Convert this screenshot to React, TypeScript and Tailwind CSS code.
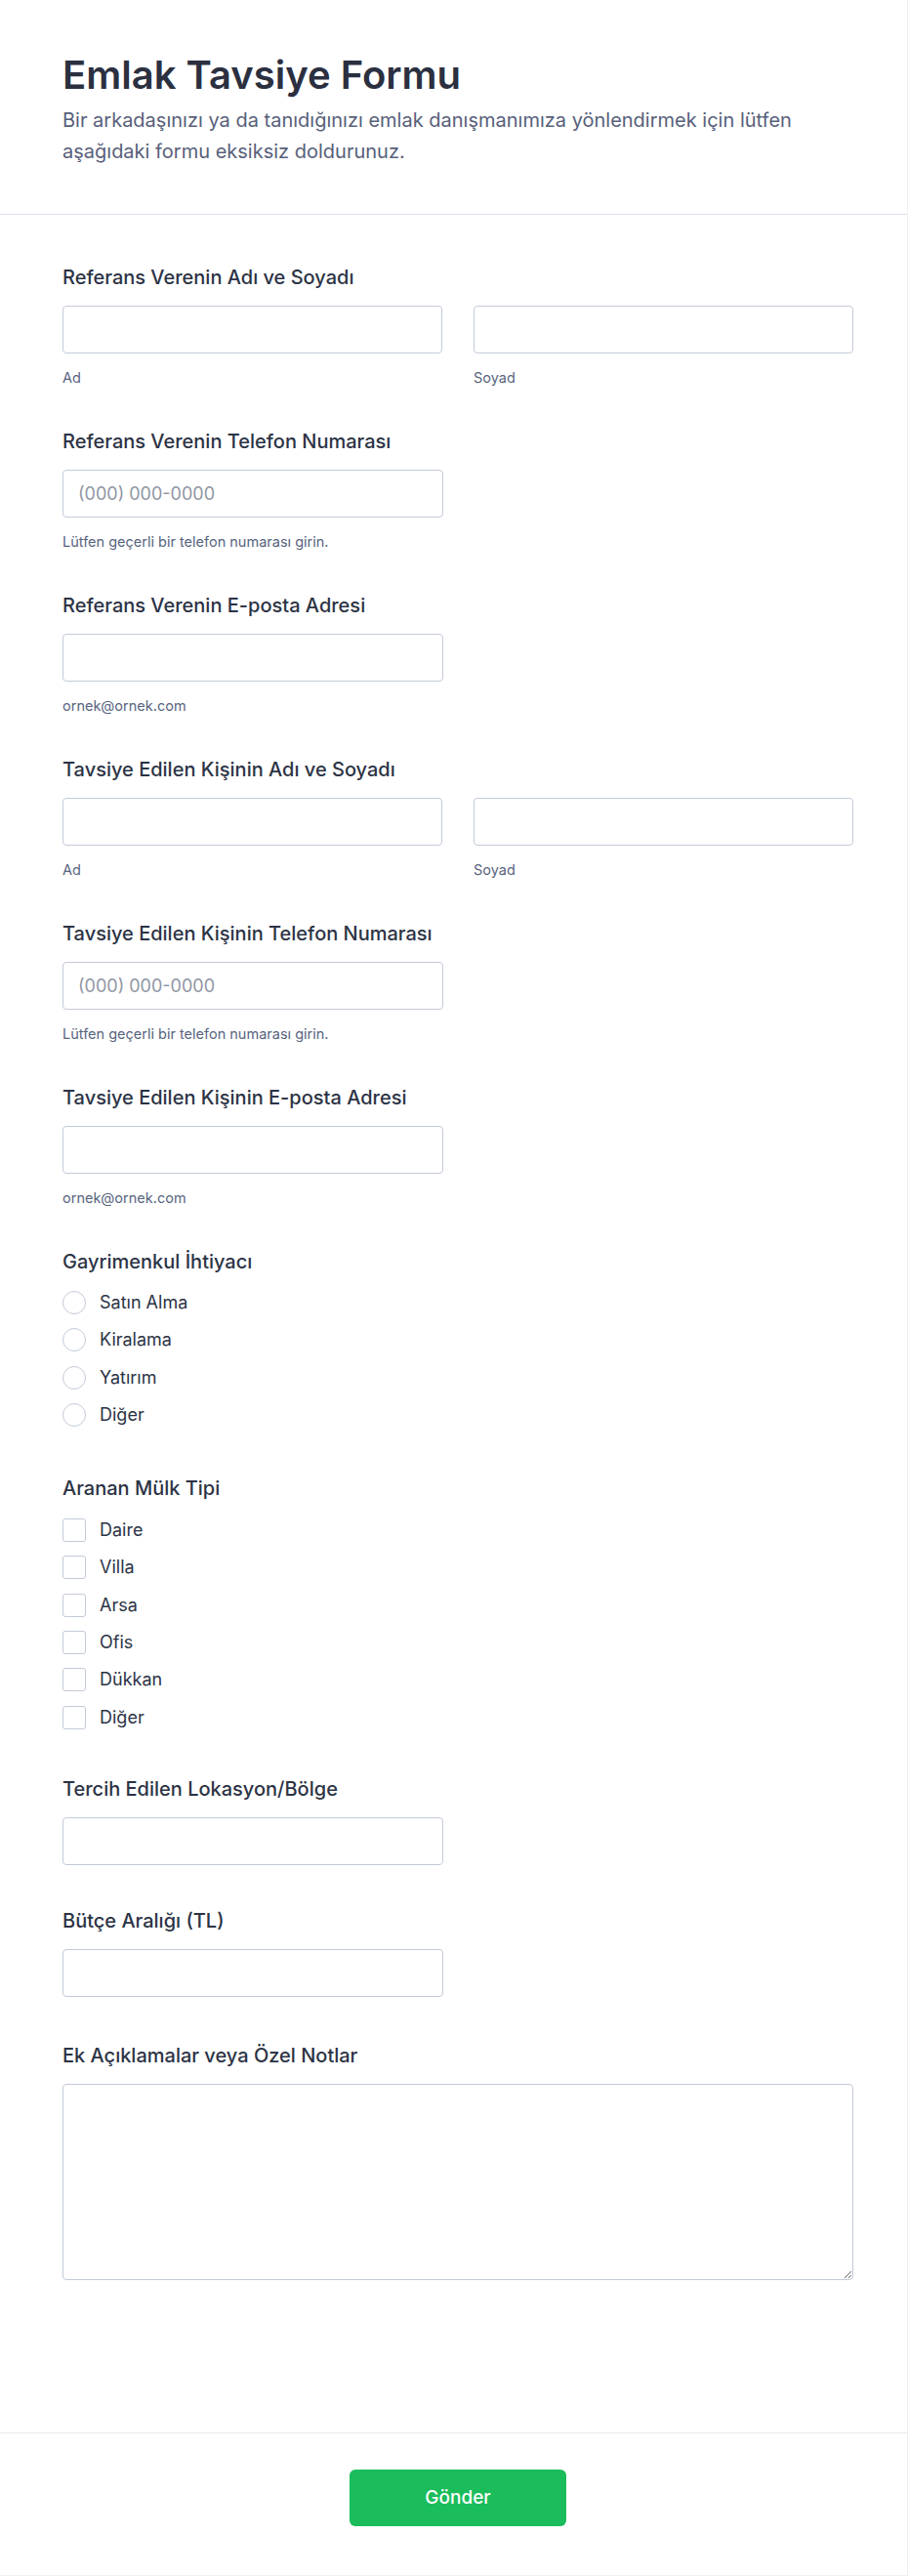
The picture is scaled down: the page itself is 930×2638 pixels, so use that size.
import React from "react";

function Label({ children }: { children: React.ReactNode }) {
  return <div className="text-[20px] leading-7 font-medium text-[#2c3345]">{children}</div>;
}

function Input({ placeholder, wide }: { placeholder?: string; wide?: boolean }) {
  return (
    <input
      type="text"
      placeholder={placeholder}
      className={
        wide
          ? "block h-[49px] w-full rounded-[4px] border border-[#c3cad8] bg-white px-[15px] text-[18px] text-[#2c3345] placeholder:text-[#8f96a3] outline-none"
          : "block h-[49px] w-[390px] rounded-[4px] border border-[#c3cad8] bg-white px-[15px] text-[18px] text-[#2c3345] placeholder:text-[#8f96a3] outline-none"
      }
    />
  );
}

function Helper({ children }: { children: React.ReactNode }) {
  return <div className="mt-[15px] text-[14.5px] leading-5 text-[#57647e]">{children}</div>;
}

function NameField({ label }: { label: string }) {
  return (
    <div>
      <Label>{label}</Label>
      <div className="mt-[15px] grid grid-cols-2 gap-8">
        <div>
          <Input wide />
          <Helper>Ad</Helper>
        </div>
        <div>
          <Input wide />
          <Helper>Soyad</Helper>
        </div>
      </div>
    </div>
  );
}

function SingleField({ label, helper, placeholder }: { label: string; helper?: string; placeholder?: string }) {
  return (
    <div>
      <Label>{label}</Label>
      <div className="mt-[15px]">
        <Input placeholder={placeholder} />
        {helper && <Helper>{helper}</Helper>}
      </div>
    </div>
  );
}

function Radio({ label }: { label: string }) {
  return (
    <label className="flex h-6 items-center gap-[14px]">
      <span className="h-6 w-6 shrink-0 rounded-full border border-[#c3cad8] bg-white" />
      <span className="text-[18px] leading-6 text-[#2c3345]">{label}</span>
    </label>
  );
}

function Check({ label }: { label: string }) {
  return (
    <label className="flex h-6 items-center gap-[14px]">
      <span className="h-6 w-6 shrink-0 rounded-[3px] border border-[#c3cad8] bg-white" />
      <span className="text-[18px] leading-6 text-[#2c3345]">{label}</span>
    </label>
  );
}

export default function App() {
  return (
    <div className="min-h-[2638px] w-[930px] bg-white font-['Inter','Noto_Sans',sans-serif]">
      <div className="flex min-h-[2638px] flex-col border-r border-b border-[#eef0f4] bg-white">
        <header className="border-b border-[#dfe1ea] pl-16 pr-[55px] pt-[53px] pb-[48px]">
          <h1 className="text-[40px] leading-[48px] font-semibold text-[#2b3040]">Emlak Tavsiye Formu</h1>
          <p className="mt-[6px] text-[20px] leading-8 text-[#57607a]">
            Bir arkadaşınızı ya da tanıdığınızı emlak danışmanımıza yönlendirmek için lütfen aşağıdaki formu eksiksiz doldurunuz.
          </p>
        </header>

        <main className="flex flex-1 flex-col pl-16 pr-[55px] pt-[50px] pb-[153px]">
          <div className="flex flex-col gap-[41px]">
            <NameField label="Referans Verenin Adı ve Soyadı" />
            <SingleField
              label="Referans Verenin Telefon Numarası"
              placeholder="(000) 000-0000"
              helper="Lütfen geçerli bir telefon numarası girin."
            />
            <SingleField label="Referans Verenin E-posta Adresi" helper="ornek@ornek.com" />
            <NameField label="Tavsiye Edilen Kişinin Adı ve Soyadı" />
            <SingleField
              label="Tavsiye Edilen Kişinin Telefon Numarası"
              placeholder="(000) 000-0000"
              helper="Lütfen geçerli bir telefon numarası girin."
            />
            <SingleField label="Tavsiye Edilen Kişinin E-posta Adresi" helper="ornek@ornek.com" />

            <div className="pb-[8px]">
              <Label>Gayrimenkul İhtiyacı</Label>
              <div className="mt-4 flex flex-col gap-[14.4px]">
                <Radio label="Satın Alma" />
                <Radio label="Kiralama" />
                <Radio label="Yatırım" />
                <Radio label="Diğer" />
              </div>
            </div>

            <div className="pb-[6px]">
              <Label>Aranan Mülk Tipi</Label>
              <div className="mt-[17px] flex flex-col gap-[14.3px]">
                <Check label="Daire" />
                <Check label="Villa" />
                <Check label="Arsa" />
                <Check label="Ofis" />
                <Check label="Dükkan" />
                <Check label="Diğer" />
              </div>
            </div>

            <SingleField label="Tercih Edilen Lokasyon/Bölge" />
            <div className="pt-[2px]">
              <SingleField label="Bütçe Aralığı (TL)" />
            </div>

            <div className="pt-[5px]">
              <Label>Ek Açıklamalar veya Özel Notlar</Label>
              <textarea className="mt-[15px] block h-[201px] w-full resize-y rounded-[4px] border border-[#c3cad8] bg-white p-3 text-[18px] outline-none" />
            </div>
          </div>
        </main>

        <footer className="flex justify-center border-t border-[#e6e9ef] pl-16 pr-[55px] pt-[37px] pb-[50px]">
          <button className="h-[58px] w-[222px] rounded-[6px] bg-[#1abc5b] text-[19px] font-medium text-white">
            Gönder
          </button>
        </footer>
      </div>
    </div>
  );
}
